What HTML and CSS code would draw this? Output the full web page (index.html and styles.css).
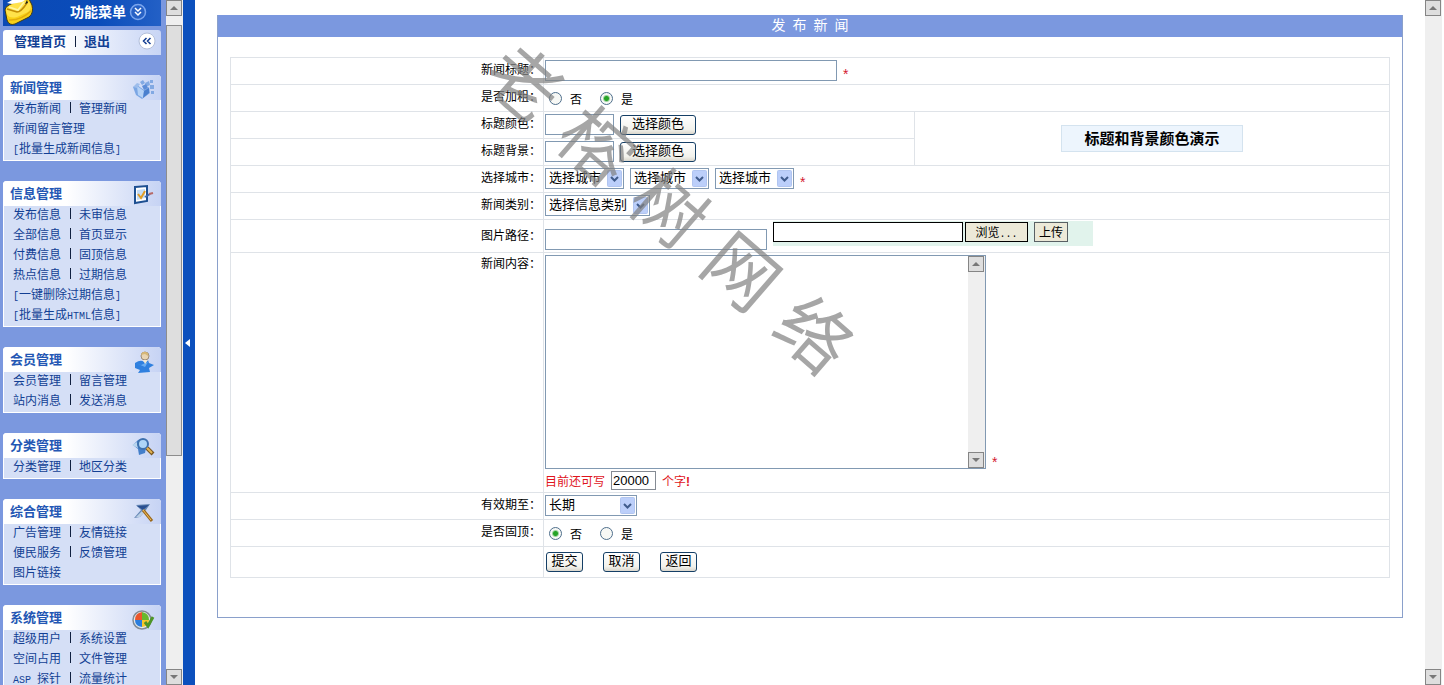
FILE: index.html
```html
<!DOCTYPE html>
<html lang="zh-CN">
<head>
<meta charset="utf-8">
<title>发布新闻</title>
<link rel="stylesheet" href="styles.css">
</head>
<body>
<div class="frames">
  <aside class="sidebar">
    <header class="menu-head">
      <svg class="mail" viewBox="0 0 32 26" aria-hidden="true">
        <path d="M2 10Q2 7 6 5L14 1L20 -1H26L29 5Q31 13 26 17L12 24Q6 26 4 20Z" fill="#f8d018" stroke="#3c3a20"/>
        <path d="M3 10Q3 7 8 5L22 0L27 3Q29 9 25 12L14 17Q6 19 4 14Z" fill="#ffe24a"/>
        <path d="M4 9L14 12Q18 12 24 3" fill="none" stroke="#c28c06" stroke-width="1.500"/>
        <path d="M6 7L15 10L21 2" fill="none" stroke="#fff6a0" stroke-width="1.500"/>
        <path d="M6 20Q17 21 28 11" fill="none" stroke="#e3ac0c" stroke-width="1.500"/>
        <path d="M4 3L9 0H22L19 2L9 4Z" fill="#fff"/>
        <path d="M24 0L22 4L25 3Z" fill="#1a1a14"/>
      </svg>
      <strong>功能菜单</strong>
      <svg class="round" viewBox="0 0 18 18" aria-hidden="true">
        <circle cx="9" cy="9" r="7.500" fill="#2862c5" stroke="#7ba6ee" stroke-width="1.500"/>
        <path d="M6 5L9 8L12 5M6 9L9 12L12 9" fill="none" stroke="#fff" stroke-width="1.500"/>
      </svg>
    </header>
    <div class="quick">
      <a href="#">管理首页</a><i></i><a href="#">退出</a>
      <svg class="round" viewBox="0 0 18 18" aria-hidden="true">
        <circle cx="9" cy="9" r="8" fill="#fff" stroke="#b3bfda"/>
        <path d="M8.500 6L5.500 9L8.500 12M12.500 6L9.500 9L12.500 12" fill="none" stroke="#123c91" stroke-width="1.500"/>
      </svg>
    </div>

    <section class="group">
      <h2>新闻管理
        <svg viewBox="0 0 24 24" aria-hidden="true">
          <path d="M1 9L5 7L12 12L17 9L18 15L10 21L4 17Z" fill="#7ba6e4"/>
          <path d="M5 8L12 13L11 20L6 17Z" fill="#b4d1f6"/><path d="M12 13L17 10L17 15L11 20Z" fill="#4a7fce"/>
          <path d="M1 9L5 5L8 6L5 10Z" fill="#9dbdeb"/>
          <path d="M8 4L11 2L13 5L10 7ZM13 5L17 3L18 7L14 9ZM18 7L22 7L22 11L18 11ZM18 2H21V5H18ZM19 13H22V16H19Z" fill="#82a9e3"/>
          <path d="M10 8L14 6L16 10L12 12Z" fill="#5d8dd8"/>
        </svg></h2>
      <p><a href="#">发布新闻</a><i></i><a href="#">管理新闻</a></p>
      <p><a href="#">新闻留言管理</a></p>
      <p><a href="#"><span class="half">[</span>批量生成新闻信息<span class="half">]</span></a></p>
    </section>

    <section class="group">
      <h2>信息管理
        <svg viewBox="0 0 24 24" aria-hidden="true">
          <path d="M3 3L15 2V17L3 19Z" fill="#fff" stroke="#1d4f91" stroke-width="2"/>
          <path d="M5 6L13 5V14L5 16Z" fill="#c4dcf5"/>
          <path d="M6 10L9 14L13 7" fill="none" stroke="#e09b23" stroke-width="2"/>
          <path d="M13 13L18 10" stroke="#3c65aa" stroke-width="2"/><path d="M17 10L21 9" stroke="#b76a68" stroke-width="2"/>
        </svg></h2>
      <p><a href="#">发布信息</a><i></i><a href="#">未审信息</a></p>
      <p><a href="#">全部信息</a><i></i><a href="#">首页显示</a></p>
      <p><a href="#">付费信息</a><i></i><a href="#">固顶信息</a></p>
      <p><a href="#">热点信息</a><i></i><a href="#">过期信息</a></p>
      <p><a href="#"><span class="half">[</span>一键删除过期信息<span class="half">]</span></a></p>
      <p><a href="#"><span class="half">[</span>批量生成<span class="half">HTML</span>信息<span class="half">]</span></a></p>
    </section>

    <section class="group">
      <h2>会员管理
        <svg viewBox="0 0 24 24" aria-hidden="true">
          <path d="M3 13Q9 9 12 12L16 10L17 13L22 15L17 18L18 22L6 23L8 20L3 18Z" fill="#2f80df"/>
          <path d="M4 13L9 15L16 12L13 17Z" fill="#69adf3"/>
          <circle cx="13" cy="6" r="4" fill="#e9d5b3" stroke="#9d8c77"/>
          <path d="M9 5Q10 1 14 2Q17 3 16 6L13 4Z" fill="#d6b777"/><path d="M11 10L13 14L16 10Z" fill="#f3ead5"/>
        </svg></h2>
      <p><a href="#">会员管理</a><i></i><a href="#">留言管理</a></p>
      <p><a href="#">站内消息</a><i></i><a href="#">发送消息</a></p>
    </section>

    <section class="group">
      <h2>分类管理
        <svg viewBox="0 0 24 24" aria-hidden="true">
          <path d="M1 9L6 4L10 3L15 7L13 17L7 19L6 13Z" fill="#447fca"/><path d="M0 9L5 6L6 12Z" fill="#b9d5ee"/>
          <circle cx="11" cy="8" r="5" fill="#add5f7" stroke="#3e71ae" stroke-width="2"/>
          <path d="M15 12L21 18" stroke="#77551f" stroke-width="4"/><path d="M15 12L20 17" stroke="#e3b453" stroke-width="2"/>
        </svg></h2>
      <p><a href="#">分类管理</a><i></i><a href="#">地区分类</a></p>
    </section>

    <section class="group">
      <h2>综合管理
        <svg viewBox="0 0 24 24" aria-hidden="true">
          <path d="M4 3L18 2L14 8L8 15L2 16L9 8Z" fill="#6587b4"/><path d="M5 4L17 3L11 8Z" fill="#294f91"/>
          <path d="M4 15L12 7L14 9L8 15Z" fill="#b9cee4"/>
          <path d="M11 8L20 19" stroke="#9b681b" stroke-width="3"/><path d="M11 8L19 18" stroke="#f2c05c"/>
        </svg></h2>
      <p><a href="#">广告管理</a><i></i><a href="#">友情链接</a></p>
      <p><a href="#">便民服务</a><i></i><a href="#">反馈管理</a></p>
      <p><a href="#">图片链接</a></p>
    </section>

    <section class="group">
      <h2>系统管理
        <svg viewBox="0 0 24 24" aria-hidden="true">
          <circle cx="10" cy="12" r="9" fill="#e5e9ed" stroke="#838b93" stroke-width="1.500"/>
          <path d="M10 4V12H3Q3 5 10 4Z" fill="#ec562b"/><path d="M10 4Q17 5 17 12H10Z" fill="#68b82e"/>
          <path d="M3 12H10V19Q3 18 3 12Z" fill="#2b7ddd"/><path d="M10 12H17Q17 18 10 19Z" fill="#f7c72b"/>
          <path d="M13 14L16 18L21 9" fill="none" stroke="#4d9528" stroke-width="3"/>
        </svg></h2>
      <p><a href="#">超级用户</a><i></i><a href="#">系统设置</a></p>
      <p><a href="#">空间占用</a><i></i><a href="#">文件管理</a></p>
      <p><a href="#"><span class="half">ASP </span>探针</a><i></i><a href="#">流量统计</a></p>
    </section>
  </aside>

  <div class="scroll">
    <button class="up" aria-label="向上滚动"></button>
    <div class="track"><div class="thumb"></div></div>
    <button class="down" aria-label="向下滚动"></button>
  </div>
  <button class="splitter" aria-label="收起菜单"></button>

  <main>
    <form class="panel">
      <h1>发&ensp;布&ensp;新&ensp;闻</h1>
      <div class="panel-body">
        <table>
          <colgroup><col class="c-label"><col class="c-field"><col></colgroup>
          <tr><th><label for="title">新闻标题：</label></th><td colspan="2"><div class="line"><input id="title" class="w-title" type="text"><b>*</b></div></td></tr>
          <tr><th>是否加粗：</th><td colspan="2"><div class="line radios"><label><input type="radio" name="bold">否</label><label><input type="radio" name="bold" checked>是</label></div></td></tr>
          <tr><th><label for="color">标题颜色：</label></th><td><div class="line"><input id="color" class="w-color" type="text"><button type="button" class="btn wide">选择颜色</button></div></td>
            <td rowspan="2"><div class="preview">标题和背景颜色演示</div></td></tr>
          <tr><th><label for="bg">标题背景：</label></th><td><div class="line"><input id="bg" class="w-color" type="text"><button type="button" class="btn wide">选择颜色</button></div></td></tr>
          <tr><th><label for="city">选择城市：</label></th><td colspan="2"><div class="line"><select id="city" class="w-city"><option>选择城市</option></select><select class="w-city" aria-label="二级城市"><option>选择城市</option></select><select class="w-city" aria-label="三级城市"><option>选择城市</option></select><b>*</b></div></td></tr>
          <tr><th><label for="kind">新闻类别：</label></th><td colspan="2"><div class="line"><select id="kind" class="w-kind"><option>选择信息类别</option></select></div></td></tr>
          <tr class="r-image"><th><label for="path">图片路径：</label></th><td colspan="2"><div class="line image-line"><input id="path" class="w-path" type="text">
            <div class="upload"><input type="text" aria-label="本地文件"><button type="button" class="browse">浏览<span class="half">...</span></button><button type="button" class="send">上传</button></div></div></td></tr>
          <tr class="r-content"><th><label for="content">新闻内容：</label></th><td colspan="2">
            <div class="editor-line"><div class="editor"><textarea id="content"></textarea>
              <div class="scroll"><button type="button" class="up" aria-label="内容向上滚动"></button><div class="track"></div><button type="button" class="down" aria-label="内容向下滚动"></button></div></div><b>*</b></div>
            <div class="count"><label for="left">目前还可写</label><input id="left" type="text" value="20000"><span>个字<strong>!</strong></span></div></td></tr>
          <tr><th><label for="until">有效期至：</label></th><td colspan="2"><div class="line"><select id="until" class="w-until"><option>长期</option></select></div></td></tr>
          <tr><th>是否固顶：</th><td colspan="2"><div class="line radios"><label><input type="radio" name="top" checked>否</label><label><input type="radio" name="top">是</label></div></td></tr>
          <tr class="r-actions"><th></th><td colspan="2"><div class="line actions"><button type="button" class="btn">提交</button><button type="button" class="btn">取消</button><button type="button" class="btn">返回</button></div></td></tr>
        </table>
      </div>
      <div class="watermark" aria-hidden="true"><span>老</span><span>榕</span><span>树</span><span>网</span><span>络</span></div>
    </form>
  </main>
  <div class="scroll page-scroll">
    <button class="up" aria-label="页面向上滚动"></button>
    <div class="track"></div>
    <button class="down" aria-label="页面向下滚动"></button>
  </div>
</div>
</body>
</html>
```
FILE: styles.css
```css
* { box-sizing: border-box; }
body, h1, h2, p { margin: 0; }
body, input, select, button, textarea {
  font-family: "Liberation Sans", "Noto Sans CJK SC", sans-serif;
  font-size: 12px;
}
body { background: #fff; color: #000; }
a { text-decoration: none; color: #123f94; }
button { padding: 0; color: #000; }
.frames { display: flex; height: 100vh; overflow: hidden; }

/* Sidebar */
.sidebar {
  flex: none;
  width: 166px;
  padding: 0 5px 0 3px;
  overflow: hidden;
  background: #7b98df;
}
.menu-head {
  display: flex;
  align-items: center;
  height: 26px;
  background: linear-gradient(90deg, #0b49b5, #0a4cba 60%, #2360c6);
  color: #fff;
}
.menu-head strong { margin-left: 35px; font-size: 14px; font-weight: 700; line-height: 18px; padding-bottom: 2px; }
.menu-head .round { margin: 0 0 2px 3px; }
.mail { width: 32px; height: 26px; }
.round { width: 18px; height: 18px; }
.quick {
  display: flex;
  align-items: center;
  height: 25px;
  margin: 4px 0 20px;
  padding: 0 5px 3px 11px;
  border-radius: 3px 3px 0 0;
  background: linear-gradient(90deg, #fff 35%, #c8d5f5);
}
.quick a { font-size: 13px; font-weight: 700; padding-bottom: 1px; }
.quick .round { margin-left: auto; }
.sidebar i { width: 1px; height: 11px; margin: 0 8px 0 9px; background: #102040; }
.group {
  margin-bottom: 20px;
  border-bottom: 1px solid #fff;
  border-radius: 4px 4px 0 0;
  background: #d5dff6;
  box-shadow: inset 1px 0 #fff, inset -1px 0 #fff;
}
.group h2 {
  display: flex;
  align-items: center;
  justify-content: space-between;
  height: 25px;
  padding: 0 5px 2px 7px;
  border-radius: 4px 4px 0 0;
  background: linear-gradient(90deg, #fff 40%, #c6d3f4);
  color: #2457b4;
  font-size: 13px;
}
.group h2 svg { width: 24px; height: 24px; margin-top: 6px; }
.group p {
  display: flex;
  align-items: center;
  height: 20px;
  padding: 0 10px 5px;
  white-space: pre;
}
.half { font-family: "Liberation Mono", monospace; font-size: 10px; }

/* Scroll bars and splitter */
.scroll {
  display: flex;
  flex: none;
  flex-direction: column;
  width: 17px;
  background: #efefef;
}
.scroll button {
  display: flex;
  align-items: center;
  justify-content: center;
  flex: none;
  height: 16px;
  margin-right: 1px;
  border: 1px solid #858585;
  background: #dedede;
}
.scroll button::before { content: ""; border: 4px solid transparent; }
.scroll .up::before { border-top: 0; border-bottom-color: #777; }
.scroll .down::before { border-bottom: 0; border-top-color: #777; }
.track { flex: 1; padding-top: 9px; }
.thumb {
  height: 67%;
  margin-right: 1px;
  border: 1px solid #8d8d8d;
  background: #dedede;
}
.splitter {
  display: flex;
  align-items: center;
  flex: none;
  width: 12px;
  padding-left: 2px;
  border: 0;
  background: #0c50bd;
}
.splitter::before {
  content: "";
  border: 4px solid transparent;
  border-left: 0;
  border-right: 5px solid #fff;
}
.page-scroll { margin-right: 2px; }

/* Form panel */
main { flex: 1; min-width: 0; padding: 15px 22px; }
.panel { position: relative; border: 1px solid #8aa0cb; border-top: 0; }
.panel h1 {
  height: 22px;
  background: #7b98df;
  color: #fff;
  font-size: 14px;
  font-weight: 400;
  line-height: 20px;
  text-align: center;
}
.panel-body { padding: 20px 12px 39px; }
table { width: 100%; border-collapse: collapse; table-layout: fixed; }
.c-label { width: 27%; }
.c-field { width: 32%; }
tr { height: 27px; }
.r-image { height: 33px; }
.r-content { height: 240px; }
.r-actions { height: 31px; }
th, td { padding: 0 1px; border: 1px solid #dfe3e8; }
th {
  padding: 0 2px 5px;
  font-weight: 400;
  text-align: right;
}
.r-image th { padding-bottom: 4px; }
.r-content th { padding-top: 1px; vertical-align: top; }
.r-content td { padding-top: 2px; vertical-align: top; }
.line { display: flex; align-items: center; gap: 6px; }
b { color: #d3172e; font-weight: 400; font-size: 14px; line-height: 14px; }
.line b { align-self: flex-end; }
input[type="text"], select, .editor {
  height: 21px;
  padding: 0 3px;
  border: 1px solid #8199b2;
  border-radius: 0;
  background-color: #fff;
  color: #000;
}
td > .line { padding-bottom: 1px; }
select {
  appearance: none;
  font-size: 13px;
  line-height: 16px;
  padding-bottom: 2px;
  background-image: url("data:image/svg+xml,%3Csvg xmlns='http://www.w3.org/2000/svg' width='16' height='17'%3E%3Crect x='.5' y='.5' width='14' height='16' rx='1' fill='%23bccffa' stroke='%23b1c5f0'/%3E%3Cpath d='M4 7l3.500 3.500L11 7' fill='none' stroke='%23405c8c' stroke-width='2'/%3E%3C/svg%3E");
  background-repeat: no-repeat;
  background-position: right 0 top 1px;
}
.w-title { width: 292px; }
.w-color { width: 69px; }
.w-city { width: 79px; }
.w-kind { width: 105px; }
.w-until { width: 92px; }
.w-path { width: 222px; }
.btn {
  height: 20px;
  width: 37px;
  border: 1px solid #153f66;
  border-radius: 3px;
  background: linear-gradient(#fff, #f2f2ec 75%, #d9d6cc);
  font-size: 13px;
  line-height: 14px;
  padding-bottom: 2px;
}
.wide { width: 76px; }
td > .radios { gap: 18px; padding: 1px 0 0 4px; }
.radios label { display: flex; align-items: center; gap: 8px; }
input[type="radio"] {
  appearance: none;
  width: 13px;
  height: 13px;
  margin: 0;
  border: 1px solid #4f6f8c;
  border-radius: 50%;
  background: #f7f8f5;
}
input[type="radio"]:checked { background: radial-gradient(circle, #25a325 0 2px, #9fd49f 3px, #f7f8f5 4px); }
.preview {
  width: 182px;
  height: 27px;
  margin: 0 auto;
  border: 1px solid #d4e3ef;
  background: #edf5fd;
  font-size: 15px;
  font-weight: 700;
  line-height: 26px;
  text-align: center;
}
td > .image-line { align-items: flex-end; padding-bottom: 2px; }
.upload {
  display: flex;
  width: 320px;
  height: 25px;
  margin-bottom: 4px;
  padding-top: 1px;
  background: #e1f3ec;
}
.upload input[type="text"] { width: 190px; height: 20px; border-color: #000; }
.upload button { height: 20px; padding-bottom: 2px; background: #ece9d8; }
.upload .browse { width: 63px; margin: 0 6px 0 2px; border: 1px solid #000; }
.upload .send { width: 34px; border: 1px solid #596064; }
.editor-line { display: flex; align-items: flex-end; gap: 6px; }
.editor { display: flex; width: 441px; height: 214px; padding: 0; }
.editor textarea { flex: 1; border: 0; resize: none; background: none; }
.count { display: flex; align-items: center; gap: 6px; padding-top: 2px; color: #e0141c; }
.count input[type="text"] { width: 45px; height: 19px; padding: 0 1px; border-color: #858b94; font-size: 13px; }
td > .actions { gap: 20px; padding-left: 1px; }

/* Diagonal mark drawn over the form */
.watermark {
  position: absolute;
  top: 195px;
  left: 450px;
  display: flex;
  gap: 24px;
  color: #808080b3;
  font-size: 72px;
  font-weight: 400;
  line-height: 1;
  pointer-events: none;
  transform: translate(-50%, -50%) rotate(41deg);
}
```
